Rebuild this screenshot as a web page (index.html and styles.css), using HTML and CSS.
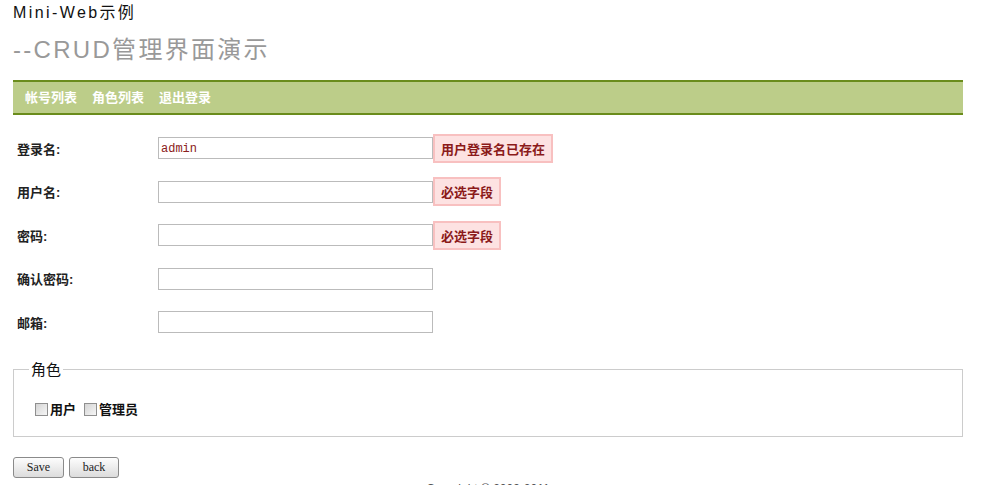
FILE: index.html
```html
<!DOCTYPE html>
<html lang="zh">
<head>
<meta charset="utf-8">
<title>Mini-Web示例</title>
<link rel="stylesheet" href="styles.css">
</head>
<body>
<div class="page">
  <header class="header">
    <h1 class="title">Mini-Web示例</h1>
    <h2 class="subtitle">--CRUD管理界面演示</h2>
  </header>
  <nav class="nav">
    <a class="nav-link" href="#">帐号列表</a>
    <a class="nav-link" href="#">角色列表</a>
    <a class="nav-link" href="#">退出登录</a>
  </nav>
  <form class="form">
    <div class="row">
      <label class="label">登录名:</label>
      <input class="field" type="text" value="admin">
      <span class="error">用户登录名已存在</span>
    </div>
    <div class="row">
      <label class="label">用户名:</label>
      <input class="field" type="text">
      <span class="error">必选字段</span>
    </div>
    <div class="row">
      <label class="label">密码:</label>
      <input class="field" type="password">
      <span class="error">必选字段</span>
    </div>
    <div class="row">
      <label class="label">确认密码:</label>
      <input class="field" type="password">
    </div>
    <div class="row">
      <label class="label">邮箱:</label>
      <input class="field" type="text">
    </div>
    <fieldset class="roles">
      <legend class="roles-legend">角色</legend>
      <div class="role-list">
        <label class="role"><input class="check" type="checkbox">用户</label>
        <label class="role"><input class="check" type="checkbox">管理员</label>
      </div>
    </fieldset>
    <div class="actions">
      <button class="btn btn-save" type="button">Save</button>
      <button class="btn btn-back" type="button">back</button>
    </div>
  </form>
  <footer class="footer">Copyright © 2009-2011</footer>
</div>
</body>
</html>
```

FILE: styles.css
```css
html, body {
  margin: 0;
  padding: 0;
  background: #fff;
}

body {
  font-family: "Liberation Sans", "Noto Sans CJK SC", sans-serif;
  color: #222;
}

.page {
  width: 950px;
  margin-left: 13px;
}

.header {
  padding-top: 3px;
}

.title {
  margin: 0;
  font-size: 16px;
  line-height: 20px;
  font-weight: normal;
  letter-spacing: 2.4px;
  color: #111;
}

.subtitle {
  margin: 12px 0 0;
  font-size: 24px;
  line-height: 30px;
  font-weight: normal;
  letter-spacing: 2.3px;
  color: #999;
}

.nav {
  margin-top: 15px;
  height: 31px;
  background: #bccd89;
  border-top: 2px solid #6a8c1b;
  border-bottom: 2px solid #6a8c1b;
  display: flex;
  align-items: center;
  gap: 15px;
  padding-left: 12px;
}

.nav-link {
  color: #fff;
  font-size: 13px;
  font-weight: bold;
  text-decoration: none;
  line-height: 16px;
}

.form {
  margin-top: 22px;
}

.row {
  display: flex;
  align-items: center;
  height: 22px;
  margin-bottom: 21.5px;
  padding-left: 4px;
}

.label {
  width: 141px;
  font-size: 13px;
  font-weight: bold;
  color: #222;
}

.field {
  box-sizing: border-box;
  width: 275px;
  height: 22px;
  margin: 0;
  padding: 2px 2px 0;
  border: 1px solid #bbb;
  font-family: "Liberation Mono", monospace;
  font-size: 12px;
  color: #8b2020;
  outline: none;
}

.error {
  box-sizing: border-box;
  height: 29px;
  padding: 0 6px;
  display: flex;
  align-items: center;
  background: #fde2e2;
  border: 2px solid #f8c0c0;
  color: #8b1a1a;
  font-size: 13px;
  font-weight: bold;
}

.roles {
  margin: 28.5px 0 0;
  padding: 0 15px 0 15px;
  border: 1px solid #ccc;
  height: 75px;
  box-sizing: border-box;
}

.roles-legend {
  padding: 0 2px;
  font-size: 15px;
  line-height: 16px;
  color: #111;
}

.role-list {
  display: flex;
  padding-left: 6px;
  padding-top: 23px;
  gap: 8px;
}

.role {
  display: flex;
  align-items: center;
  font-size: 13px;
  font-weight: bold;
  color: #111;
  line-height: 18px;
}

.check {
  appearance: none;
  -webkit-appearance: none;
  width: 13px;
  height: 13px;
  margin: 0 2px 0 0;
  border: 1px solid #8f8f8f;
  background: linear-gradient(135deg, #d4d4d4, #f6f6f6);
  box-sizing: border-box;
}

.actions {
  display: flex;
  gap: 5px;
  margin-top: 20px;
}

.btn {
  box-sizing: border-box;
  height: 21px;
  padding: 0;
  border: 1px solid #8a8a8a;
  border-radius: 3px;
  background: linear-gradient(#fdfdfd, #dcdcdc);
  font-family: "Liberation Serif", serif;
  font-size: 12px;
  color: #222;
}

.btn-save {
  width: 51px;
}

.btn-back {
  width: 50px;
}

.footer {
  margin-top: 3px;
  text-align: center;
  font-size: 12px;
  line-height: 16px;
  color: #555;
}
```
